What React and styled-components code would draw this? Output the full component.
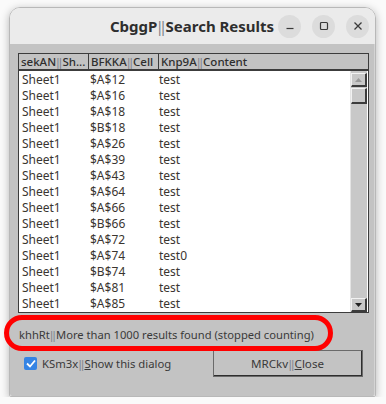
import React from "react"
import styled, { createGlobalStyle } from "styled-components"

const GlobalStyle = createGlobalStyle`
  html, body {
    margin: 0;
    padding: 0;
    background: #fafafa;
  }
  body {
    font-family: "Noto Sans", "Open Sans", sans-serif;
  }
`

const rows = [
  ["Sheet1", "$A$12", "test"],
  ["Sheet1", "$A$16", "test"],
  ["Sheet1", "$A$18", "test"],
  ["Sheet1", "$B$18", "test"],
  ["Sheet1", "$A$26", "test"],
  ["Sheet1", "$A$39", "test"],
  ["Sheet1", "$A$43", "test"],
  ["Sheet1", "$A$64", "test"],
  ["Sheet1", "$A$66", "test"],
  ["Sheet1", "$B$66", "test"],
  ["Sheet1", "$A$72", "test"],
  ["Sheet1", "$A$74", "test0"],
  ["Sheet1", "$B$74", "test"],
  ["Sheet1", "$A$81", "test"],
  ["Sheet1", "$A$85", "test"]
]

const Window = styled.div`
  position: relative;
  margin: 7px 0 0 9px;
  width: 367px;
  height: 390px;
  display: flex;
  flex-direction: column;
  border-radius: 11px 11px 2px 2px;
  border: 1px solid #b8b8b8;
  box-sizing: border-box;
  box-shadow: 0 2px 9px rgba(0, 0, 0, 0.28);
`

const TitleBar = styled.div`
  height: 36px;
  flex: none;
  background: #ebebeb;
  border-radius: 10px 10px 0 0;
  display: flex;
  align-items: center;
  padding: 0 6px 0 0;
  box-sizing: border-box;
`

const Title = styled.div`
  flex: 1;
  text-align: center;
  padding-left: 96px;
  font-family: "Noto Sans", sans-serif;
  font-weight: 700;
  font-size: 15px;
  color: #2e2e2e;
`

const Sep = styled.span`
  color: ${ p => p.color || "#7a7f8a" };
  font-weight: 400;
`

const WinButtons = styled.div`
  display: flex;
  gap: 11px;
`

const WinButton = styled.div`
  width: 23px;
  height: 23px;
  border-radius: 50%;
  background: #dcdcdc;
  display: flex;
  align-items: center;
  justify-content: center;
`

const Body = styled.div`
  flex: 1;
  background: #c3c3c3;
  padding: 9px 8px 0 8px;
  display: flex;
  flex-direction: column;
  border-right: 1px solid #d4d4d4;
  border-radius: 0 0 2px 2px;
`

const Table = styled.div`
  border: 1px solid #3c3c3c;
  background: #fff;
  display: flex;
  flex-direction: column;
  width: 349px;
`

const Header = styled.div`
  display: grid;
  grid-template-columns: 69px 70px 1fr;
  height: 15px;
  background: #c3c3c3;
  border-bottom: 2px solid #3c3c3c;
`

const HeadCell = styled.div`
  font-size: 11.5px;
  line-height: 15px;
  color: #2e2e2e;
  padding-left: 2px;
  border-left: ${ p => p.first ? "none" : "1px solid #3c3c3c" };
  white-space: nowrap;
  overflow: hidden;
  font-weight: 500;
`

const ListArea = styled.div`
  display: flex;
  height: 241px;
`

const List = styled.div`
  flex: 1;
  padding-top: 1px;
`

const Row = styled.div`
  display: grid;
  grid-template-columns: 68px 69px 1fr;
  height: 16px;
  align-items: center;
  padding-left: 3px;
`

const Cell = styled.div`
  font-size: 12px;
  color: #3a3530;
  line-height: 16px;
`

const ScrollBar = styled.div`
  width: 16px;
  background: #c8c8c8;
  border-left: 1px solid #e4e4e4;
  display: flex;
  flex-direction: column;
  margin-right: 1px;
`

const ScrollBtn = styled.div`
  height: 14px;
  box-sizing: border-box;
  background: #c8c8c8;
  border-top: 1px solid #f2f2f2;
  border-left: 1px solid #f2f2f2;
  border-right: 2px solid #3c3c3c;
  border-bottom: 2px solid #3c3c3c;
  display: flex;
  align-items: center;
  justify-content: center;
  margin-top: ${ p => p.gap || 0 }px;
`

const Thumb = styled(ScrollBtn)`
  height: 16px;
  margin-top: 1px;
`

const Track = styled.div`
  flex: 1;
`

const Status = styled.div`
  margin-top: 13px;
  padding-left: 1px;
  font-size: 11.2px;
  color: #3a3a3a;
  height: 17px;
  line-height: 17px;
`

const Highlight = styled.div`
  position: absolute;
  left: -6px;
  top: 307px;
  width: 319px;
  height: 26px;
  border: 5px solid #ff0000;
  border-radius: 18px;
`

const Footer = styled.div`
  display: flex;
  align-items: center;
  justify-content: space-between;
  margin-top: 7px;
  padding-left: 6px;
`

const CheckLabel = styled.label`
  display: flex;
  align-items: center;
  gap: 5px;
  font-size: 11.3px;
  color: #3a3a3a;
`

const CheckBox = styled.span`
  width: 13px;
  height: 13px;
  border-radius: 2px;
  background: #3584e4;
  display: flex;
  align-items: center;
  justify-content: center;
`

const CloseButton = styled.button`
  width: 150px;
  height: 27px;
  box-sizing: border-box;
  background: #c3c3c3;
  border-top: 1px solid #ececec;
  border-left: 1px solid #ececec;
  border-right: 2px solid #2e2e2e;
  border-bottom: 2px solid #2e2e2e;
  outline: 1px solid #6a6a6a;
  outline-offset: -1px;
  font-family: "Noto Sans", sans-serif;
  font-size: 11.6px;
  color: #3a3a3a;
  padding: 0;
  margin-right: 3px;
`

const U = styled.span`
  text-decoration: underline;
`

function Arrow({ up }) {
  return (
    <svg width="7" height="4" viewBox="0 0 7 4">
      { up
        ? <path d="M0 4 L3.5 0 L7 4 Z" fill="#9a9a9a" />
        : <path d="M0 0 L3.5 4 L7 0 Z" fill="#222" /> }
    </svg>
  )
}

export default function App() {
  return (
    <>
      <GlobalStyle />
      <Window>
        <TitleBar>
          <Title>CbggP<Sep>‖</Sep>Search Results</Title>
          <WinButtons>
            <WinButton>
              <svg width="10" height="10" viewBox="0 0 10 10"><path d="M1.5 7.5 H8.5" stroke="#3a3a3a" strokeWidth="1.2" /></svg>
            </WinButton>
            <WinButton>
              <svg width="10" height="10" viewBox="0 0 10 10"><rect x="1.5" y="1.5" width="7" height="7" rx="1" fill="none" stroke="#3a3a3a" strokeWidth="1.2" /></svg>
            </WinButton>
            <WinButton>
              <svg width="10" height="10" viewBox="0 0 10 10"><path d="M1.5 1.5 L8.5 8.5 M8.5 1.5 L1.5 8.5" stroke="#3a3a3a" strokeWidth="1.3" /></svg>
            </WinButton>
          </WinButtons>
        </TitleBar>
        <Body>
          <Table>
            <Header>
              <HeadCell first>sekAN<Sep>‖</Sep>Sh...</HeadCell>
              <HeadCell>BFKKA<Sep>‖</Sep>Cell</HeadCell>
              <HeadCell>Knp9A<Sep>‖</Sep>Content</HeadCell>
            </Header>
            <ListArea>
              <List>
                { rows.map((r, i) =>
                  <Row key={ i }>
                    <Cell>{ r[0] }</Cell>
                    <Cell>{ r[1] }</Cell>
                    <Cell>{ r[2] }</Cell>
                  </Row>
                ) }
              </List>
              <ScrollBar>
                <ScrollBtn gap={ 2 }><Arrow up /></ScrollBtn>
                <Thumb />
                <Track />
                <ScrollBtn><Arrow /></ScrollBtn>
              </ScrollBar>
            </ListArea>
          </Table>
          <Status>khhRt<Sep>‖</Sep>More than 1000 results found (stopped counting)</Status>
          <Footer>
            <CheckLabel>
              <CheckBox>
                <svg width="10" height="9" viewBox="0 0 10 9"><path d="M1 4.5 L4 7.5 L9 1.5" fill="none" stroke="#fff" strokeWidth="1.8" /></svg>
              </CheckBox>
              <span>KSm3x<Sep>‖</Sep><U>S</U>how this dialog</span>
            </CheckLabel>
            <CloseButton>MRCkv<Sep>‖</Sep><U>C</U>lose</CloseButton>
          </Footer>
        </Body>
        <Highlight />
      </Window>
    </>
  )
}
